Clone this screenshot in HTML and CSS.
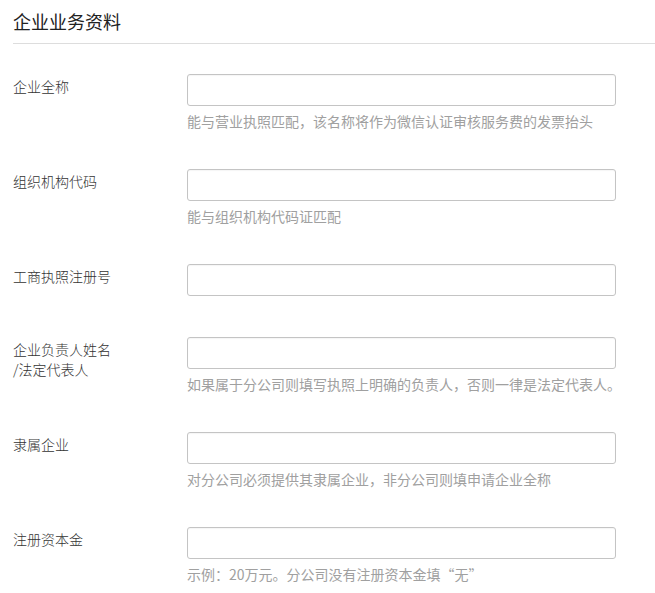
FILE: index.html
```html
<!DOCTYPE html>
<html lang="zh-CN">
<head>
<meta charset="utf-8">
<link rel="stylesheet" href="styles.css">
</head>
<body>
<div class="page">
  <h2 class="title">企业业务资料</h2>
  <form class="form">
    <div class="row">
      <label class="label">企业全称</label>
      <div class="field">
        <input class="input" type="text">
        <p class="hint">能与营业执照匹配，该名称将作为微信认证审核服务费的发票抬头</p>
      </div>
    </div>
    <div class="row">
      <label class="label">组织机构代码</label>
      <div class="field">
        <input class="input" type="text">
        <p class="hint">能与组织机构代码证匹配</p>
      </div>
    </div>
    <div class="row row-nohint">
      <label class="label">工商执照注册号</label>
      <div class="field">
        <input class="input" type="text">
      </div>
    </div>
    <div class="row">
      <label class="label">企业负责人姓名<br>/法定代表人</label>
      <div class="field">
        <input class="input" type="text">
        <p class="hint">如果属于分公司则填写执照上明确的负责人，否则一律是法定代表人。</p>
      </div>
    </div>
    <div class="row">
      <label class="label">隶属企业</label>
      <div class="field">
        <input class="input" type="text">
        <p class="hint">对分公司必须提供其隶属企业，非分公司则填申请企业全称</p>
      </div>
    </div>
    <div class="row">
      <label class="label">注册资本金</label>
      <div class="field">
        <input class="input" type="text">
        <p class="hint">示例：20万元。分公司没有注册资本金填“无”</p>
      </div>
    </div>
  </form>
</div>
</body>
</html>
```

FILE: styles.css
```css
html, body {
  margin: 0;
  padding: 0;
  background: #fff;
}
body {
  font-family: "Microsoft YaHei", "Noto Sans CJK SC", "Noto Sans", sans-serif;
  color: #222;
}
.page {
  padding-left: 13px;
}
.title {
  margin: 0;
  padding: 8px 0 9px;
  font-size: 18px;
  line-height: 26px;
  font-weight: normal;
  color: #222;
  border-bottom: 1px solid #ddd;
}
.form {
  margin: 0;
  padding-top: 30px;
}
.row {
  display: flex;
  align-items: flex-start;
  margin-bottom: 37px;
}
.row-nohint {
  margin-bottom: 41px;
}
.label {
  width: 174px;
  flex: none;
  font-size: 14px;
  line-height: 20px;
  padding-top: 2px;
  color: #333;
  font-weight: 300;
}
.field {
  display: flex;
  flex-direction: column;
}
.input {
  box-sizing: border-box;
  width: 429px;
  height: 32px;
  margin: 0;
  padding: 0 8px;
  border: 1px solid #c4c4c4;
  border-radius: 3px;
  background: #fff;
  box-shadow: inset 0 1px 1px rgba(0,0,0,0.04);
  font: inherit;
  outline: none;
}
.hint {
  margin: 4px 0 0;
  font-size: 14px;
  line-height: 22px;
  color: #a0a0a0;
}
```
